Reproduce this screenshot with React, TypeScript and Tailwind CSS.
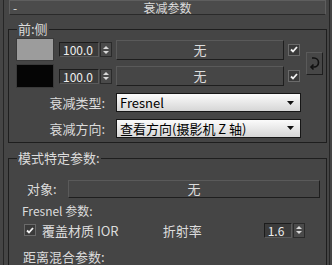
import React from "react";

const font = { fontFamily: '"Noto Sans CJK SC", "DejaVu Sans", sans-serif' };

function Spinner({ value, w }: { value: string; w: number }) {
  return (
    <div className="flex items-center h-[15px]">
      <div
        className="h-[15px] bg-[#3b3b3b] border border-t-[#1c1c1c] border-l-[#1c1c1c] border-r-[#5a5a5a] border-b-[#5a5a5a] text-[12px] leading-[13px] text-[#eeeeee] pl-[3px] overflow-hidden"
        style={{ width: w }}
      >
        {value}
      </div>
      <div className="w-[12px] h-[15px] ml-[1px] bg-[#4a4a4a] border border-[#2a2a2a] flex flex-col items-center justify-center gap-[2px]">
        <svg width="6" height="3" viewBox="0 0 6 3"><path d="M0 3 L3 0 L6 3 Z" fill="#d8d8d8" /></svg>
        <svg width="6" height="3" viewBox="0 0 6 3"><path d="M0 0 L3 3 L6 0 Z" fill="#d8d8d8" /></svg>
      </div>
    </div>
  );
}

function Check() {
  return (
    <div className="w-[12px] h-[12px] bg-[#3a3a3a] border border-[#6a6a6a] flex items-center justify-center">
      <svg width="8" height="7" viewBox="0 0 8 7">
        <path d="M1 3.5 L3 5.5 L7 1" stroke="#f2f2f2" strokeWidth="1.8" fill="none" />
      </svg>
    </div>
  );
}

function MapButton({ w, h }: { w: number; h: number }) {
  return (
    <div
      className="flex items-center justify-center bg-[#464646] border border-t-[#5a5a5a] border-l-[#5a5a5a] border-r-[#1e1e1e] border-b-[#1e1e1e] text-[13px] text-[#dcdcdc]"
      style={{ width: w, height: h }}
    >
      无
    </div>
  );
}

function Dropdown({ text, w }: { text: string; w: number }) {
  return (
    <div
      className="h-[19px] flex items-center justify-between border border-[#161616] bg-gradient-to-b from-[#fbfbfb] to-[#d6d6d6] text-black text-[13px] pl-[3px] pr-[6px]"
      style={{ width: w }}
    >
      <span className="leading-none whitespace-nowrap">{text}</span>
      <svg width="7" height="4" viewBox="0 0 7 4"><path d="M0 0 L7 0 L3.5 4 Z" fill="#111" /></svg>
    </div>
  );
}

export default function App() {
  return (
    <div className="w-[332px] h-[265px] overflow-hidden bg-[#454545] text-[#dcdcdc]" style={font}>
      <div className="ml-[3px] mr-[2px] h-full border-l border-r border-[#262626] pl-[4px] pr-[2px] flex flex-col">
        {/* title bar */}
        <div className="h-[15px] mx-[1px] border border-[#5e5e5e] border-b-[#2a2a2a] bg-[#4b4b4b] flex items-center text-[12px] leading-[13px]">
          <span className="w-[10px] pl-[3px]">-</span>
          <span className="flex-1 text-center pr-[10px]">衰减参数</span>
        </div>

        {/* group 1 */}
        <div className="mt-[14px] h-[114px] shrink-0 border border-[#1e1e1e] relative pl-[7px] pt-[8px]">
          <span className="absolute -top-[9px] left-[8px] px-[1px] bg-[#454545] text-[13px] leading-[16px]">前:侧</span>
          <div className="flex items-center">
            <div className="flex flex-col gap-[3px]">
              <div className="flex items-center">
                <div className="w-[38px] h-[23px] bg-[#9c9c9c] border border-[#3a3a3a]" />
                <div className="ml-[5px]"><Spinner value="100.0" w={40} /></div>
                <div className="ml-[4px]"><MapButton w={168} h={20} /></div>
                <div className="ml-[4px]"><Check /></div>
              </div>
              <div className="flex items-center">
                <div className="w-[38px] h-[24px] bg-[#050505] border border-[#3a3a3a]" />
                <div className="ml-[5px]"><Spinner value="100.0" w={40} /></div>
                <div className="ml-[4px]"><MapButton w={168} h={20} /></div>
                <div className="ml-[4px]"><Check /></div>
              </div>
            </div>
            <div className="ml-[6px] w-[17px] h-[23px] bg-[#474747] border border-t-[#5a5a5a] border-l-[#5a5a5a] border-r-[#1e1e1e] border-b-[#1e1e1e] flex items-center justify-center">
              <svg width="11" height="15" viewBox="0 0 11 15">
                <path d="M3 2 H5 A4.5 4.5 0 0 1 5 11 H3" stroke="#111" strokeWidth="1.6" fill="none" />
                <path d="M4.5 8.5 L2 11 L4.5 13.5" stroke="#111" strokeWidth="1.6" fill="none" />
              </svg>
            </div>
          </div>
          <div className="mt-[5px] grid grid-cols-[89px_auto] gap-x-[11px] gap-y-[6px] items-center text-[13px]">
            <span className="text-right">衰减类型:</span>
            <Dropdown text="Fresnel" w={185} />
            <span className="text-right">衰减方向:</span>
            <Dropdown text="查看方向(摄影机 Z 轴)" w={185} />
          </div>
        </div>

        {/* group 2 */}
        <div className="mt-[15px] flex-1 border border-[#1e1e1e] border-b-0 relative pl-[13px] pt-[20px] text-[13px]">
          <span className="absolute -top-[9px] left-[8px] px-[1px] bg-[#454545] leading-[16px]">模式特定参数:</span>
          <div className="flex items-center">
            <span className="w-[46px] pl-[5px]">对象:</span>
            <MapButton w={252} h={18} />
          </div>
          <div className="mt-[5px] text-[12px] leading-[14px]">Fresnel 参数:</div>
          <div className="mt-[3px] flex items-center">
            <div className="ml-[2px]"><Check /></div>
            <span className="ml-[6px]">覆盖材质 IOR</span>
            <span className="ml-[44px]">折射率</span>
            <div className="ml-[62px]"><Spinner value="1.6" w={28} /></div>
          </div>
          <div className="mt-[7px] pl-[1px]">距离混合参数:</div>
        </div>
      </div>
    </div>
  );
}
